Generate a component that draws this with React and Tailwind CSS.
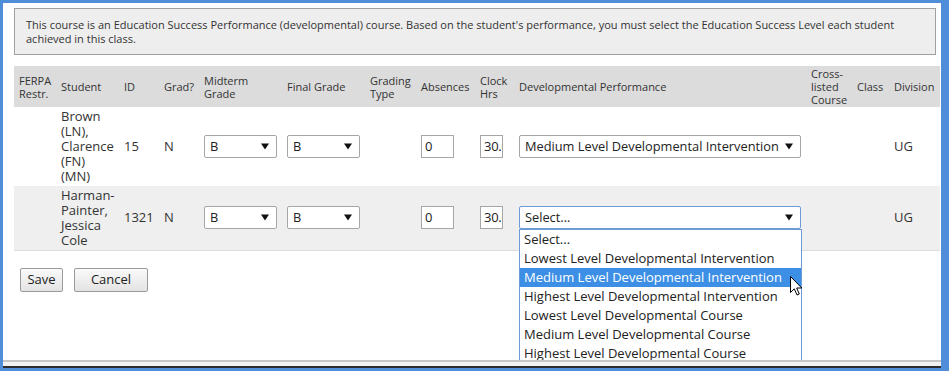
import React from 'react';

const options = [
  'Select...',
  'Lowest Level Developmental Intervention',
  'Medium Level Developmental Intervention',
  'Highest Level Developmental Intervention',
  'Lowest Level Developmental Course',
  'Medium Level Developmental Course',
  'Highest Level Developmental Course',
];

const Arrow = () => (
  <svg width="8" height="7" viewBox="0 0 8 7" className="shrink-0">
    <path d="M0 0.5 H8 L4 6.5 Z" fill="#111" />
  </svg>
);

const Select = ({ value, width, focused, children }) => (
  <div
    className={`relative flex items-center justify-between h-[23px] ${width} pl-[5px] pr-[7px] bg-white rounded-[2px] border text-[12.8px] text-[#222] ${
      focused ? 'border-[#6d9bd6]' : 'border-[#a6a6a6]'
    }`}
  >
    <span className="whitespace-nowrap">{value}</span>
    <Arrow />
    {children}
  </div>
);

const Input = ({ value, width }) => (
  <div className={`h-[23px] ${width} border border-[#a6a6a6] bg-white pl-[3px] text-[13px] leading-[21px] text-[#222] overflow-hidden whitespace-nowrap tracking-[-0.3px]`}>
    {value}
  </div>
);

const Cursor = () => (
  <svg width="13" height="21" viewBox="0 0 13 21" className="absolute left-[270px] top-[46px]">
    <path d="M0.5 0.5 V16.5 L4.3 12.8 L7 19 L9.3 18 L6.7 12 H11.8 Z" fill="#fff" stroke="#000" strokeWidth="1" strokeLinejoin="round" />
  </svg>
);

const Dropdown = () => (
  <div className="absolute left-[-1px] top-[22px] w-[283px] bg-white border border-[#6d9bd6] z-10 text-[13px]">
    {options.map((o, i) => (
      <div
        key={o}
        className={`h-[19px] pl-[4px] leading-[19px] whitespace-nowrap ${i === 2 ? 'bg-[#3d8fe6] text-white' : 'text-[#222]'}`}
      >
        {o}
      </div>
    ))}
    <Cursor />
  </div>
);

const rows = [
  {
    name: ['Brown', '(LN),', 'Clarence', '(FN)', '(MN)'],
    id: '15',
    perf: 'Medium Level Developmental Intervention',
    h: 'h-[79px]',
    bg: 'bg-white',
  },
  {
    name: ['Harman-', 'Painter,', 'Jessica', 'Cole'],
    id: '1321',
    perf: 'Select...',
    h: 'h-[64px]',
    bg: 'bg-[#efefef] border-b border-[#dcdcdc]',
    open: true,
  },
];

export default function App() {
  const th = 'pl-[5px] text-left font-normal align-middle';
  const td = 'pl-[5px] align-middle';

  return (
    <div className="w-[949px] h-[371px] bg-[#4f8ddb] pt-[3px] pl-[3px] pr-[8px] pb-[3px] flex flex-col font-['Open_Sans',sans-serif] text-[#333]">
      <div className="h-[357px] bg-white relative overflow-hidden pt-[5px] pl-[11px]">
        {/* notice */}
        <div className="w-[922px] h-[47px] bg-[#eeeeee] border border-[#a0a0a0] px-[11px] pt-[9px] text-[11px] leading-[14px]">
          This course is an Education Success Performance (developmental) course. Based on the student's performance, you must select the Education Success Level each student achieved in this class.
        </div>

        <table className="mt-[11px] w-[926px] table-fixed border-collapse text-[13px] leading-[15px]">
          <colgroup>
            <col className="w-[42px]" />
            <col className="w-[63px]" />
            <col className="w-[40px]" />
            <col className="w-[40px]" />
            <col className="w-[83px]" />
            <col className="w-[83px]" />
            <col className="w-[51px]" />
            <col className="w-[59px]" />
            <col className="w-[39px]" />
            <col className="w-[292px]" />
            <col className="w-[46px]" />
            <col className="w-[37px]" />
            <col className="w-[51px]" />
          </colgroup>
          <thead>
            <tr className="h-[41px] bg-[#dcdcdc] text-[11px] leading-[13px] whitespace-nowrap">
              <th className={th}>FERPA<br />Restr.</th>
              <th className={th}>Student</th>
              <th className={th}>ID</th>
              <th className={th}>Grad?</th>
              <th className={th}>Midterm<br />Grade</th>
              <th className={th}>Final Grade</th>
              <th className={th}>Grading<br />Type</th>
              <th className={th}>Absences</th>
              <th className={th}>Clock<br />Hrs</th>
              <th className={th}>Developmental Performance</th>
              <th className={th}>Cross-<br />listed<br />Course</th>
              <th className={th}>Class</th>
              <th className={th}>Division</th>
            </tr>
          </thead>
          <tbody>
            {rows.map((r) => (
              <tr key={r.id} className={`${r.h} ${r.bg} whitespace-nowrap`}>
                <td className={td}></td>
                <td className={td}>
                  {r.name.map((n) => (
                    <div key={n}>{n}</div>
                  ))}
                </td>
                <td className={td}>{r.id}</td>
                <td className={td}>N</td>
                <td className={td}><Select value="B" width="w-[73px]" /></td>
                <td className={td}><Select value="B" width="w-[73px]" /></td>
                <td className={td}></td>
                <td className={td}><Input value="0" width="w-[33px]" /></td>
                <td className={td}><Input value="30.0" width="w-[23px]" /></td>
                <td className={td}>
                  <Select value={r.perf} width="w-[282px]" focused={r.open}>
                    {r.open && <Dropdown />}
                  </Select>
                </td>
                <td className={td}></td>
                <td className={td}></td>
                <td className={td}>UG</td>
              </tr>
            ))}
          </tbody>
        </table>

        <div className="flex gap-[11px] mt-[17px] ml-[6px] text-[13px] text-[#222]">
          <button className="h-[24px] w-[43px] border border-[#9a9a9a] rounded-[2px] bg-gradient-to-b from-[#fafafa] to-[#e3e3e3]">Save</button>
          <button className="h-[24px] w-[74px] border border-[#9a9a9a] rounded-[2px] bg-gradient-to-b from-[#fafafa] to-[#e3e3e3]">Cancel</button>
        </div>
      </div>
      <div className="h-[2px] bg-[#c6c6c6]" />
      <div className="h-[4px] bg-[#f1f1f1]" />
      <div className="h-[2px] bg-[#2b2b2b]" />
    </div>
  );
}
